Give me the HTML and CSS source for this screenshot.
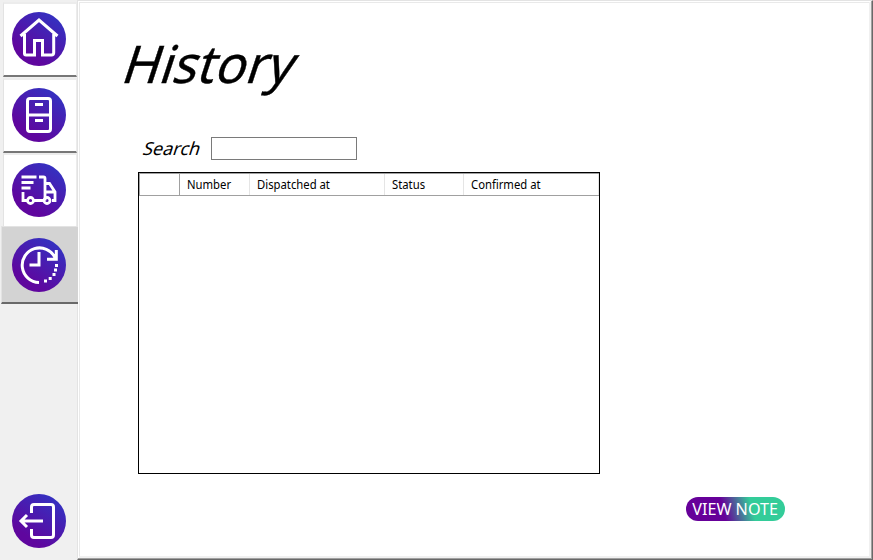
FILE: index.html
```html
<!DOCTYPE html>
<html lang="en">
<head>
<meta charset="utf-8">
<title>History</title>
<link rel="stylesheet" href="styles.css">
</head>
<body>
<svg class="defs" width="0" height="0" aria-hidden="true">
  <defs><linearGradient id="disc" x1=".3" y1=".8" x2=".8" y2=".1"><stop offset="0" stop-color="#5f069e"/><stop offset="1" stop-color="#3530c0"/></linearGradient></defs>
</svg>
<div class="app">
  <nav class="sidebar">
    <button class="nav home" aria-label="Home"><svg viewBox="0 0 54 54"><circle cx="27" cy="27" r="27" fill="url(#disc)"/><path d="M8.500 24L27 8l18.500 16M12.500 22v19.500q0 1.500 1.500 1.500H22.500V28.500h8V43h9q2.200 0 2.200-2.200V22"/></svg></button>
    <button class="nav cabinet" aria-label="Storage"><svg viewBox="0 0 54 54"><circle cx="27" cy="27" r="27" fill="url(#disc)"/><rect x="15.500" y="10.500" width="23" height="33" rx="2.500"/><path d="M14 27h26M23 16.500h8M23 32.500h8"/></svg></button>
    <button class="nav last" aria-label="Dispatch"><svg viewBox="0 0 54 54"><circle cx="27" cy="27" r="27" fill="url(#disc)"/><path d="M9.500 14h15M9.500 19.500h12M9.500 25h9M11 29v8.500h4M22 37.500h9.500M27 14h4.500q1.500 0 1.500 1.500v22M33 20.500h4.500l5.500 8.500v8.500h-3M33 29h10"/><circle cx="18.500" cy="37.500" r="3"/><circle cx="35" cy="37.500" r="3"/></svg></button>
    <button class="nav active" aria-label="History"><svg viewBox="0 0 54 54"><circle cx="27" cy="27" r="27" fill="url(#disc)"/><path d="M27 44.500A17.300 17.300 0 1 1 43 19.500M44.300 12v9.200H35M27 14v13h-9.500"/><path class="dots" d="M32 43h3M36.700 40.500h3M40.500 36.500h3M42 32h3M43 27.500h3"/></svg></button>
    <button class="exit" aria-label="Exit"><svg viewBox="0 0 54 54"><circle cx="27" cy="27" r="27" fill="url(#disc)"/><path d="M19.500 19v-6q0-2.500 2.500-2.500h17q2.500 0 2.500 2.500v28q0 2.500-2.500 2.500H22q-2.500 0-2.500-2.500v-6M31 27H9.500M15 21l-6 6 6 6"/></svg></button>
  </nav>
  <main class="panel">
    <h1><span>History</span></h1>
    <div class="search"><label for="q">Search</label><input id="q" type="text"></div>
    <div class="grid">
      <div class="head">
        <div class="corner"></div>
        <div class="c1"><span>Number</span></div>
        <div class="c2"><span>Dispatched at</span></div>
        <div class="c3"><span>Status</span></div>
        <div class="c4"><span>Confirmed at</span></div>
      </div>
    </div>
    <button class="note"><span>VIEW NOTE</span></button>
  </main>
</div>
</body>
</html>
```
FILE: styles.css
```css
* { box-sizing: border-box; }
body { margin: 0; overflow: hidden; font-family: "Noto Sans", sans-serif; color: #000; }
button { padding: 0; margin: 0; border: 0; background: none; font-family: inherit; display: flex; align-items: flex-start; }
.defs { position: absolute; }
.app { display: flex; width: 873px; height: 560px; background: #f0f0f0; }

.sidebar { width: 77px; height: 560px; padding-top: 2px; display: flex; flex-direction: column; }
.nav { margin-left: 3px; width: 74px; height: 75px; margin-bottom: 1px; flex: none; background: #fff; border-top: 2px solid #ececec; border-left: 1px solid #e3e3e3; border-right: 1px solid #ececec; border-bottom: 2px solid #777; }
.nav svg, .exit svg { display: block; flex: none; width: 54px; height: 54px; fill: none; stroke: #fff; stroke-width: 3; }
.nav svg circle:first-child, .exit svg circle:first-child { stroke: none; }
.nav svg { margin: 8px 0 0 8px; }
.nav.cabinet { margin-bottom: 0; }
.nav.last { height: 73px; border-bottom: 0; margin-bottom: 0; }
.nav.last svg { stroke-width: 2.800px; }
.nav.active { position: relative; margin-left: 1px; width: 77px; height: 78px; background: #d3d3d3; border-top-width: 1px; border-right: 0; border-color: #e3e3e3; border-bottom-color: #696969; }
.nav.active svg { margin: 11px 0 0 10px; }
.exit { margin: auto 0 12px 12px; }

.panel { width: 796px; height: 560px; background: #fff; border-style: solid; border-width: 1px; border-color: #e3e3e3 #696969 #696969 #e3e3e3; box-shadow: inset -1px -1px #a0a0a0, inset 1px 1px #fff, inset -3px -3px #f0f0f0, inset 2px 2px #e9e9e9; display: flex; flex-direction: column; align-items: flex-start; }
h1 { margin: 26px 0 0 42px; height: 72px; font-size: 52px; font-weight: 400; line-height: 72px; }
h1 span { display: inline-block; transform: skewX(-18deg) scaleX(.975); transform-origin: 0 76%; -webkit-text-stroke: .4px #000; }
.search { display: flex; margin: 37px 0 0 66px; height: 25px; align-items: center; }
.search label { width: 67px; font-size: 18px; line-height: 24px; transform: translateY(-1px) skewX(-18deg); }
.search input { width: 146px; height: 23px; border: 1px solid #7a7a7a; background: #fff; padding: 2px; outline: 0; }
.grid { width: 462px; height: 302px; margin: 11px 0 0 60px; border: 1px solid #000; }
.head { display: flex; height: 23px; border-top: 1px solid #a0a0a0; border-bottom: 1px solid #a0a0a0; font-size: 12px; line-height: 22px; }
.head > div { border-right: 1px solid #e5e5e5; padding-left: 7px; white-space: nowrap; }
.head .corner { width: 41px; border-left: 1px solid #a0a0a0; border-right-color: #a0a0a0; }
.head .c1 { width: 70px; }
.head .c2 { width: 135px; }
.head .c3 { width: 79px; }
.head .c4 { flex: 1; }
.head span { display: inline-block; transform: scaleX(.94); transform-origin: 0 50%; }
.note { justify-content: center; width: 99px; height: 24px; margin: 22.500px 0 0 608px; border-radius: 12px; background: linear-gradient(75deg, #660099 38%, #33cc99 66%); color: #fff; font-size: 17px; line-height: 24px; }
.note span { display: block; white-space: nowrap; margin: 0 -10px; transform: scaleX(.95); }
```
